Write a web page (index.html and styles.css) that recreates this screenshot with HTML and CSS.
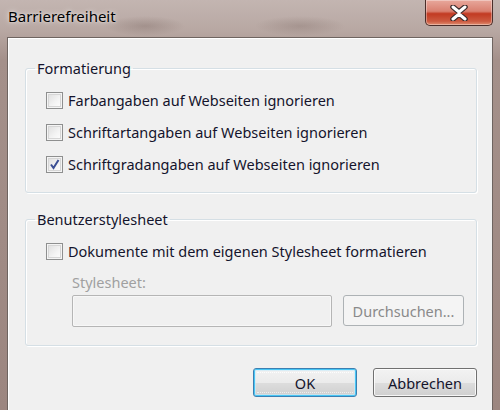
FILE: index.html
```html
<!DOCTYPE html>
<html lang="de">
<head>
<meta charset="utf-8">
<title>Barrierefreiheit</title>
<link rel="stylesheet" href="styles.css">
</head>
<body>
<div class="window">
  <div class="titlebar">
    <span class="title">Barrierefreiheit</span>
    <button class="close" aria-label="Schließen">
      <svg width="24" height="16" viewBox="0 0 24 16">
        <path d="M6 2 L12 7 L18 2 M6 14 L12 9 L18 14" fill="none" stroke="#3a2a2a" stroke-width="5.5" stroke-linecap="round" stroke-linejoin="round"/>
        <path d="M6 2 L12 7 L18 2 M6 14 L12 9 L18 14" fill="none" stroke="#ffffff" stroke-width="3" stroke-linecap="round" stroke-linejoin="round"/>
      </svg>
    </button>
  </div>
  <div class="client">
    <fieldset class="group">
      <legend>Formatierung</legend>
      <div class="group-body">
        <label class="check"><span class="box"></span>Farbangaben auf Webseiten ignorieren</label>
        <label class="check"><span class="box"></span>Schriftartangaben auf Webseiten ignorieren</label>
        <label class="check"><span class="box checked"><svg width="13" height="13" viewBox="0 0 13 13"><path d="M3 6.5 L5.5 10 L10.5 2" fill="none" stroke="#3b4f94" stroke-width="2"/></svg></span>Schriftgradangaben auf Webseiten ignorieren</label>
      </div>
    </fieldset>
    <fieldset class="group group2">
      <legend>Benutzerstylesheet</legend>
      <div class="group-body">
        <label class="check"><span class="box"></span>Dokumente mit dem eigenen Stylesheet formatieren</label>
        <div class="sheet">
          <div class="sheet-label">Stylesheet:</div>
          <div class="sheet-row">
            <div class="input"></div>
            <div class="btn disabled">Durchsuchen...</div>
          </div>
        </div>
      </div>
    </fieldset>
    <div class="actions">
      <div class="btn ok"><span class="focus">OK</span></div>
      <div class="btn">Abbrechen</div>
    </div>
  </div>
</div>
</body>
</html>
```
FILE: styles.css
```css
html, body {
  margin: 0;
  padding: 0;
}
body {
  width: 500px;
  height: 410px;
  overflow: hidden;
  font-family: "Noto Sans", "Open Sans", sans-serif;
  font-size: 14.5px;
  color: #14142c;
}
.window {
  width: 500px;
  height: 410px;
  display: flex;
  flex-direction: column;
  background:
    radial-gradient(ellipse 40px 10px at 145px 26px, rgba(120,100,95,0.35), transparent),
    radial-gradient(ellipse 45px 10px at 300px 26px, rgba(120,100,95,0.3), transparent),
    linear-gradient(to bottom, #c3b5b1 0px, #b8a8a3 30px, #a4908a 60px, #9c8680 410px);
}
.titlebar {
  height: 37px;
  display: flex;
  justify-content: space-between;
  align-items: flex-start;
  padding: 0 7px 0 8px;
}
.title {
  margin-top: 6px;
  line-height: 20px;
  font-size: 15px;
  color: #000;
  text-shadow: 0 0 6px rgba(255,255,255,0.7), 0 0 3px rgba(255,255,255,0.6);
}
.close {
  width: 68px;
  height: 26px;
  margin: 0;
  padding: 0;
  border: 1px solid #4a2e2a;
  border-top: none;
  border-radius: 0 0 5px 5px;
  background: linear-gradient(to bottom, #e8a89c 0%, #d98070 45%, #c23a22 55%, #cc5a40 85%, #e08e70 100%);
  box-shadow: inset 0 0 0 1px rgba(255,255,255,0.35);
  display: flex;
  align-items: center;
  justify-content: center;
}
.client {
  flex: 1;
  margin: 0 7px 0 7px;
  border: 1px solid #6e6460;
  border-bottom: none;
  background: #f0f0f0;
  box-shadow: inset 1px 1px 0 #ffffff;
  padding: 21px 15px 0 17px;
  display: flex;
  flex-direction: column;
}
.group {
  margin: 0;
  padding: 0;
  border: 1px solid #d5dfe5;
  border-radius: 3px;
  box-shadow: inset 1px 1px 0 #ffffff, 1px 1px 0 #ffffff;
  min-width: 0;
}
.group legend {
  margin-left: 9px;
  padding: 0 2px;
  line-height: 18px;
  font-size: 14.5px;
  color: #14142c;
}
.group-body {
  padding: 7px 0 12px 20px;
}
.group2 {
  margin-top: 17px;
}
.group2 .group-body {
  padding-bottom: 18px;
}
.check {
  height: 32px;
  display: flex;
  align-items: center;
  gap: 5px;
  line-height: 18px;
}
.box {
  width: 15px;
  height: 15px;
  border: 1px solid #8e8f8f;
  background: linear-gradient(135deg, #dcdcdc 0%, #f4f4f4 60%, #ffffff 100%);
  box-shadow: inset 0 0 0 1px #f4f4f4, inset 0 0 0 2px #d6d6d6;
  display: flex;
  align-items: center;
  justify-content: center;
  flex: none;
}
.sheet {
  padding-left: 26px;
}
.sheet-label {
  margin-top: 5px;
  line-height: 20px;
  color: #a0a0a0;
}
.sheet-row {
  margin-top: 3px;
  display: flex;
  gap: 11px;
  align-items: flex-start;
}
.input {
  width: 258px;
  height: 30px;
  border: 1px solid #b5b5b5;
  border-radius: 2px;
  background: #f0f0f0;
  box-shadow: inset 0 0 0 1px #f7f7f7;
}
.btn {
  box-sizing: border-box;
  height: 29px;
  border: 1px solid #707070;
  border-radius: 3px;
  background: linear-gradient(to bottom, #f2f2f2 0%, #ebebeb 50%, #dddddd 51%, #cfcfcf 100%);
  box-shadow: inset 0 0 0 1px rgba(255,255,255,0.8);
  display: flex;
  align-items: center;
  justify-content: center;
  font-size: 14.5px;
  color: #14142c;
}
.btn.disabled {
  width: 121px;
  height: 31px;
  border-color: #adb2b5;
  background: #f4f4f4;
  color: #8a8a8a;
  box-shadow: none;
}
.actions {
  margin-top: 22px;
  display: flex;
  justify-content: flex-end;
  gap: 16px;
}
.actions .btn {
  width: 104px;
}
.actions .ok {
  border-color: #3c7fb1;
  box-shadow: inset 0 0 0 1px #48c6f5, inset 0 0 0 2px rgba(200,235,250,0.6);
  background: linear-gradient(to bottom, #f2f2f2 0%, #ebebeb 50%, #dddddd 51%, #cfcfcf 100%);
  padding: 3px;
}
.focus {
  align-self: stretch;
  flex: 1;
  display: flex;
  align-items: center;
  justify-content: center;
  border-top: 1px dotted rgba(255,255,255,0.9);
  border-bottom: 1px dotted rgba(255,255,255,0.6);
}
```
